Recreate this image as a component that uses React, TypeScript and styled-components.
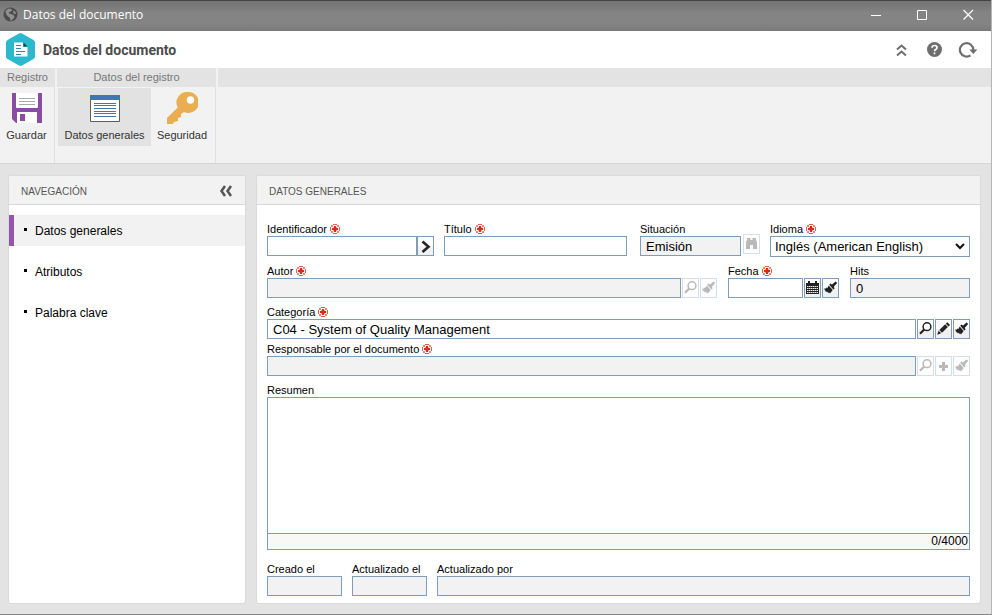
import React from "react";
import styled, { createGlobalStyle } from "styled-components";

const GlobalStyle = createGlobalStyle`
  *, *::before, *::after { box-sizing: border-box; }
  body { margin: 0; background: #e3e3e3; }
  button, input, select, textarea { font: inherit; color: inherit; margin: 0; border-radius: 0; }
`;

const Window = styled.div`
  min-height: 100vh;
  display: flex;
  flex-direction: column;
  background: #e3e3e3;
  border-right: 1px solid #b5b5b5;
  border-bottom: 1px solid #868686;
  font-family: "Liberation Sans", Arial, sans-serif;
  font-size: 11px;
  color: #000;
`;

const TitleBar = styled.header`
  height: 31px;
  display: flex;
  align-items: center;
  gap: 5px;
  padding: 0 0 3px 3px;
  border-top: 1px solid #454345;
  background: linear-gradient(#777 0, #777 3px, #848484 12px, #848484 22px, #7a7a7a 30px);
  color: #fff;
  font-family: "Open Sans", sans-serif;
  font-size: 12px;
  line-height: 16px;
`;

const WindowControls = styled.div`
  display: flex;
  margin-left: auto;
`;

const WindowButton = styled.button`
  width: 46px;
  height: 26px;
  display: flex;
  align-items: center;
  justify-content: center;
  padding: 0;
  border: 0;
  background: none;
`;

const AppHeader = styled.div`
  height: 37px;
  display: flex;
  align-items: center;
  gap: 7px;
  padding: 0 13px 0 5px;
  background: #fff;
`;

const PageTitle = styled.h1`
  flex: 1;
  margin: 0;
  font-family: Roboto, sans-serif;
  font-size: 14px;
  font-weight: 700;
  color: #4c4c4c;
`;

const HeaderActions = styled.div`
  display: flex;
  align-items: center;
  gap: 13px;
`;

const PlainButton = styled.button`
  display: flex;
  padding: 0;
  border: 0;
  background: none;
  color: #6e6e6e;
`;

const Ribbon = styled.div`
  height: 96px;
  display: flex;
  gap: 2px;
  background: #f2f2f2;
  border-bottom: 1px solid #d6d6d6;
`;

const RibbonGroup = styled.section<{ $grow?: boolean }>`
  flex: ${(p) => (p.$grow ? "1" : "none")};
  display: flex;
  flex-direction: column;
`;

const RibbonTitle = styled.h2`
  height: 19px;
  margin: 0;
  background: #e3e3e3;
  color: #777;
  font-size: 11px;
  font-weight: 400;
  line-height: 18px;
  text-align: center;
`;

const RibbonTools = styled.div`
  flex: 1;
  display: flex;
  align-items: flex-start;
  padding: 1px 2px 0 1px;
  border-right: 1px solid #e0e0e0;
`;

const Tool = styled.button<{ $width: number; $active?: boolean }>`
  width: ${(p) => p.$width}px;
  height: 58px;
  display: flex;
  flex-direction: column;
  align-items: center;
  gap: 3px;
  padding: 3px 0 0;
  border: 0;
  background: ${(p) => (p.$active ? "#e2e2e2" : "transparent")};
  color: #333;
  line-height: 14px;
  white-space: nowrap;
`;

const Workspace = styled.main`
  flex: 1;
  display: flex;
  gap: 12px;
  padding: 12px 11px 11px 9px;
`;

const Panel = styled.section<{ $width?: number }>`
  flex: ${(p) => (p.$width ? `0 0 ${p.$width}px` : "1")};
  min-width: 0;
  display: flex;
  flex-direction: column;
  background: #fff;
  border-radius: 2px;
  box-shadow: 0 0 1px 1px #dadada;
`;

const PanelHeader = styled.div`
  height: 29px;
  display: flex;
  align-items: center;
  justify-content: space-between;
  padding: 2px 12px 0;
  background: #f2f2f2;
  border-bottom: 1px solid #d8d8d8;
`;

const PanelTitle = styled.h2`
  margin: 0;
  font-size: 10px;
  font-weight: 400;
  color: #555;
`;

const NavList = styled.ul`
  list-style: none;
  margin: 0;
  padding: 10px 0 0;
  display: flex;
  flex-direction: column;
  gap: 10px;
`;

const NavLink = styled.a<{ $active?: boolean }>`
  height: 31px;
  display: flex;
  align-items: center;
  gap: 8px;
  padding-left: 10px;
  border-left: 5px solid ${(p) => (p.$active ? "#9355ad" : "transparent")};
  background: ${(p) => (p.$active ? "#f2f2f2" : "transparent")};
  color: #000;
  font-size: 12px;
  text-decoration: none;

  &::before {
    content: "";
    width: 3px;
    height: 3px;
    margin-bottom: 3px;
    background: #000;
  }
`;

const Form = styled.form`
  flex: 1;
  display: flex;
  flex-direction: column;
  padding: 17px 10px 7px;
`;

const Row = styled.div<{ $gap: number; $after: number }>`
  display: flex;
  align-items: flex-start;
  gap: ${(p) => p.$gap}px;
  margin-bottom: ${(p) => p.$after}px;
`;

const LookupRow = styled(Row)`
  margin-left: 3px;
`;

const FieldBox = styled.div<{ $width?: number }>`
  flex: ${(p) => (p.$width ? `0 0 ${p.$width}px` : "1")};
  min-width: 0;
  display: flex;
  flex-direction: column;
`;

const Label = styled.label`
  height: 14px;
  display: flex;
  align-items: center;
  gap: 3px;
  line-height: 14px;
  white-space: nowrap;
`;

const Controls = styled.div`
  display: flex;
  gap: 1px;
`;

const JoinedControls = styled(Controls)`
  gap: 0;
`;

const TextInput = styled.input`
  flex: 1;
  width: 0;
  min-width: 0;
  height: 20px;
  padding: 0 5px;
  border: 1px solid #7f9db9;
  background: #fff;
  font-size: 13px;
  outline: 0;

  &:read-only { background: #f2f2f2; }
`;

const SelectBox = styled.div`
  display: grid;
  align-items: center;

  > * { grid-area: 1 / 1; }
  > svg { justify-self: end; margin-right: 5px; pointer-events: none; }
`;

const Select = styled.select`
  width: 100%;
  height: 21px;
  padding: 0 4px;
  border: 1px solid #7f9db9;
  background: #fff;
  font-size: 13px;
  appearance: none;
`;

const IconButton = styled.button`
  width: 17px;
  height: 20px;
  display: flex;
  justify-content: center;
  padding: 1px 0 0;
  border: 1px solid #7f9db9;
  background: linear-gradient(#fff 50%, #f0f0f0 50%);
  color: #222;

  &:disabled { border-color: #d5dfe9; color: #b9b9b9; background: #fdfdfd; }
`;

const LookupButton = styled(IconButton)`
  margin-top: 12px;
`;

const SummaryBox = styled.div`
  flex: 1;
  display: flex;
  flex-direction: column;
  margin-bottom: 12px;
`;

const TextArea = styled.textarea`
  flex: 1;
  min-height: 80px;
  padding: 4px;
  border: 1px solid #7f9db9;
  font-size: 13px;
  outline: 0;
  resize: none;
`;

const Counter = styled.div`
  height: 16px;
  padding-right: 1px;
  border: 1px solid #7f9db9;
  border-top: 0;
  background: #f8f8f7;
  font-size: 12px;
  line-height: 14px;
  text-align: right;
`;

const RequiredMark = () => (
  <svg width="10" height="10" viewBox="0 0 10 10" role="img" aria-label="requerido">
    <path
      d="M3 .5h4M3 9.500h4M.5 3v4M9.500 3v4M1.500 1.500h1v1h-1zM7.500 1.500h1v1h-1zM1.500 7.500h1v1h-1zM7.500 7.500h1v1h-1z"
      fill="none"
      stroke="#ec5a4c"
    />
    <path d="M5 2v6M2 5h6" stroke="#e02818" strokeWidth="2" />
    <path d="M3 3.500h4M3 6.500h4" stroke="#f3968d" />
    <path d="M5 2v6" stroke="#e02818" strokeWidth="2" />
  </svg>
);

const SearchIcon = () => (
  <svg width="15" height="15" viewBox="0 0 15 15" fill="none" stroke="currentColor">
    <circle cx="9" cy="5.700" r="3.900" strokeWidth="1.500" />
    <path d="M6.200 8.500L2 12.700" strokeWidth="2.200" />
  </svg>
);

const BrushIcon = () => (
  <svg width="15" height="15" viewBox="0 0 15 15" fill="currentColor">
    <path d="M12.600 1.500l1.600 1.600-3.400 3.600.8 1.500-1.200 1.200-4.200-4.600 1.200-1.200 1.600.8z" />
    <path d="M5.700 5.500l4 4.600L7 13.500l-1-1.300-.7.800-1.300-1.400-1 .4L1 8.500l1.700.2.400-1.200 1.300.4z" />
  </svg>
);

const PencilIcon = () => (
  <svg width="15" height="15" viewBox="0 0 15 15" fill="currentColor">
    <path d="M11.300 1.200l2.700 2.700-1.500 1.500-2.700-2.700zM9.200 3.300l2.700 2.700-5.900 5.700-2.700-2.700zM2.600 9.700L5.200 12.300l-4 1.400z" />
  </svg>
);

const CalendarIcon = () => (
  <svg width="15" height="15" viewBox="0 0 15 15" fill="none" stroke="currentColor">
    <path d="M1 3h13v11H1z" fill="currentColor" stroke="none" />
    <path d="M4 1v3M11 1v3" strokeWidth="2" />
    <path d="M2 6.500h11M2 8.500h11M2 10.500h11M2 12.500h11" stroke="#eee" strokeDasharray="1.500 .5" />
  </svg>
);

const BinocularsIcon = () => (
  <svg width="15" height="15" viewBox="0 0 15 15" fill="currentColor">
    <path d="M3 2h3.500v2h2V2H12v2l1 2v7H9V9H6v4H2V6l1-2z" />
  </svg>
);

const PlusIcon = () => (
  <svg width="15" height="15" viewBox="0 0 15 15" stroke="currentColor" strokeWidth="3">
    <path d="M7.500 4v9M3 8.500h9" />
  </svg>
);

const ArrowIcon = () => (
  <svg width="15" height="15" viewBox="0 0 15 15" fill="none" stroke="#222" strokeWidth="2.600">
    <path d="M4.500 3.500L10.500 8.700l-6 5.200" />
  </svg>
);

type FieldProps = {
  id: string;
  label: string;
  width?: number;
  required?: boolean;
  readOnly?: boolean;
  value?: string;
  joined?: boolean;
  children?: React.ReactNode;
};

const Field = ({ id, label, width, required, readOnly, value = "", joined, children }: FieldProps) => {
  const Wrapper = joined ? JoinedControls : Controls;
  return (
    <FieldBox $width={width}>
      <Label htmlFor={id}>
        {label} {required && <RequiredMark />}
      </Label>
      <Wrapper>
        <TextInput id={id} type="text" defaultValue={value} readOnly={readOnly} />
        {children}
      </Wrapper>
    </FieldBox>
  );
};

export default function App() {
  return (
    <>
      <GlobalStyle />
      <Window>
        <TitleBar>
          <svg width="15" height="15" viewBox="0 0 15 15">
            <circle cx="7.500" cy="7.500" r="7" fill="#4b4b4b" />
            <path d="M2.500 4l3-2.500 3 .5 .5 1.500-2 1.500-1 0 0 1.500 2 .5 2.500 1 1 1.500-1 2-2 2-1 .5-.5-3-2-1.500L3 7z" fill="#8f8f8f" />
            <path d="M10.500 3.500l2 1.500.5 2-1.500 0-1.500-1.500z" fill="#8f8f8f" />
          </svg>
          <span>Datos del documento</span>
          <WindowControls>
            <WindowButton type="button" aria-label="Minimizar">
              <svg width="11" height="11" stroke="#fff"><path d="M0 6.500h10" /></svg>
            </WindowButton>
            <WindowButton type="button" aria-label="Maximizar">
              <svg width="11" height="11" stroke="#fff" fill="none"><path d="M.5 1.500h9v9h-9z" /></svg>
            </WindowButton>
            <WindowButton type="button" aria-label="Cerrar">
              <svg width="11" height="11" stroke="#fff" strokeWidth="1.200"><path d="M.5 1l9.500 9.500M10 1L.5 10.500" /></svg>
            </WindowButton>
          </WindowControls>
        </TitleBar>

        <AppHeader>
          <svg width="31" height="33" viewBox="0 0 31 33">
            <path d="M14 .5q1.500-.8 3 0l11.500 6.500q1.500 1 1.500 2.500v14q0 1.500-1.500 2.500l-11.500 6.500q-1.500.8-3 0l-11.500-6.500q-1.500-1-1.500-2.500v-14q0-1.500 1.500-2.500z" fill="#2cb9cd" />
            <path d="M9 9.500h9v4.500h4.500v9.500H9z" fill="#fff" />
            <path d="M18.500 9.500l4 4h-4z" fill="#15434d" />
            <path d="M11 12.500h5M11 15.500h5M11 18.500h9M11 21.500h5" stroke="#2591a3" />
          </svg>
          <PageTitle>Datos del documento</PageTitle>
          <HeaderActions>
            <PlainButton type="button" aria-label="Contraer">
              <svg width="21" height="20" viewBox="0 0 21 20" fill="none" stroke="currentColor" strokeWidth="2">
                <path d="M6 9.500l4.500-4 4.500 4M6 15.500l4.500-4 4.500 4" />
              </svg>
            </PlainButton>
            <PlainButton type="button" aria-label="Ayuda">
              <svg width="20" height="20" viewBox="0 0 20 20">
                <circle cx="9.500" cy="9.500" r="7.500" fill="currentColor" />
                <path d="M7 7.800q0-2.300 2.500-2.300T12 7.500q0 1.200-1.300 2-1.200.7-1.200 1.800M9.500 12.500v1.800" fill="none" stroke="#fff" strokeWidth="1.700" />
              </svg>
            </PlainButton>
            <PlainButton type="button" aria-label="Actualizar">
              <svg width="20" height="20" viewBox="0 0 20 20">
                <path d="M12.500 15.300A6.700 6.700 0 1 1 15.300 10" fill="none" stroke="currentColor" strokeWidth="2.200" />
                <path d="M11.300 9.500H19.300L15.300 14z" fill="currentColor" />
              </svg>
            </PlainButton>
          </HeaderActions>
        </AppHeader>

        <Ribbon>
          <RibbonGroup>
            <RibbonTitle>Registro</RibbonTitle>
            <RibbonTools>
              <Tool type="button" $width={51}>
                <svg width="32" height="34" viewBox="0 0 32 34">
                  <path d="M1 2h30v30H5l-4-4z" fill="#8b4ba5" />
                  <path d="M5 2h22v14q0 1-1 1H6q-1 0-1-1z" fill="#fff" />
                  <path d="M8 7.500h16M8 10.500h16M8 13.500h16" stroke="#aaa" />
                  <path d="M6 21h20v11H6z" fill="#fff" />
                  <path d="M9 23h5v7H9z" fill="#8b4ba5" />
                </svg>
                Guardar
              </Tool>
            </RibbonTools>
          </RibbonGroup>
          <RibbonGroup>
            <RibbonTitle>Datos del registro</RibbonTitle>
            <RibbonTools>
              <Tool type="button" $width={93} $active>
                <svg width="32" height="34" viewBox="0 0 32 34">
                  <path d="M1.500 4.500h29v26h-29z" fill="#fff" stroke="#5d5d5d" />
                  <path d="M1 4h30v5H1z" fill="#3d78b4" />
                  <path d="M5 12.500h22M5 14.500h22M5 17.500h22M5 20.500h22M5 22.500h22M5 25.500h22" stroke="#3f78b0" />
                </svg>
                Datos generales
              </Tool>
              <Tool type="button" $width={62}>
                <svg width="32" height="34" viewBox="0 0 32 34">
                  <path d="M22 1a10.500 10.500 0 1 1-4 20l-3 2v3l-3 1v3l-4 1-1 2H1v-6l10.800-10.500A10.500 10.500 0 0 1 22 1z" fill="#e9ae52" />
                  <circle cx="24.500" cy="9" r="3.700" fill="#fff" />
                </svg>
                Seguridad
              </Tool>
            </RibbonTools>
          </RibbonGroup>
          <RibbonGroup $grow>
            <RibbonTitle />
          </RibbonGroup>
        </Ribbon>

        <Workspace>
          <Panel as="nav" $width={236}>
            <PanelHeader>
              <PanelTitle>NAVEGACIÓN</PanelTitle>
              <PlainButton type="button" aria-label="Ocultar navegación">
                <svg width="14" height="12" viewBox="0 0 14 12" fill="none" stroke="#555" strokeWidth="2.500">
                  <path d="M6 1L2.500 6l3.500 5M12 1L8.500 6l3.500 5" />
                </svg>
              </PlainButton>
            </PanelHeader>
            <NavList>
              <li><NavLink href="#datos" $active>Datos generales</NavLink></li>
              <li><NavLink href="#atributos">Atributos</NavLink></li>
              <li><NavLink href="#palabra">Palabra clave</NavLink></li>
            </NavList>
          </Panel>

          <Panel>
            <PanelHeader>
              <PanelTitle>DATOS GENERALES</PanelTitle>
            </PanelHeader>
            <Form>
              <Row $gap={10} $after={7}>
                <Field id="identificador" label="Identificador" width={167} required joined>
                  <IconButton type="button" aria-label="Generar"><ArrowIcon /></IconButton>
                </Field>
                <Field id="titulo" label="Título" required />
                <LookupRow $gap={2} $after={0}>
                  <Field id="situacion" label="Situación" width={101} value="Emisión" readOnly />
                  <LookupButton type="button" aria-label="Ver situación" disabled><BinocularsIcon /></LookupButton>
                </LookupRow>
                <FieldBox $width={200}>
                  <Label htmlFor="idioma">Idioma <RequiredMark /></Label>
                  <SelectBox>
                    <Select id="idioma"><option>Inglés (American English)</option></Select>
                    <svg width="10" height="7" fill="none" stroke="#111" strokeWidth="2"><path d="M1 1l4 4 4-4" /></svg>
                  </SelectBox>
                </FieldBox>
              </Row>
              <Row $gap={11} $after={7}>
                <Field id="autor" label="Autor" required readOnly>
                  <IconButton type="button" aria-label="Buscar autor" disabled><SearchIcon /></IconButton>
                  <IconButton type="button" aria-label="Limpiar autor" disabled><BrushIcon /></IconButton>
                </Field>
                <Field id="fecha" label="Fecha" width={111} required>
                  <IconButton type="button" aria-label="Calendario"><CalendarIcon /></IconButton>
                  <IconButton type="button" aria-label="Limpiar fecha"><BrushIcon /></IconButton>
                </Field>
                <Field id="hits" label="Hits" width={120} value="0" readOnly />
              </Row>
              <Row $gap={0} $after={3}>
                <Field id="categoria" label="Categoría" value="C04 - System of Quality Management" required>
                  <IconButton type="button" aria-label="Buscar categoría"><SearchIcon /></IconButton>
                  <IconButton type="button" aria-label="Editar categoría"><PencilIcon /></IconButton>
                  <IconButton type="button" aria-label="Limpiar categoría"><BrushIcon /></IconButton>
                </Field>
              </Row>
              <Row $gap={0} $after={7}>
                <Field id="responsable" label="Responsable por el documento" required readOnly>
                  <IconButton type="button" aria-label="Buscar responsable" disabled><SearchIcon /></IconButton>
                  <IconButton type="button" aria-label="Agregar responsable" disabled><PlusIcon /></IconButton>
                  <IconButton type="button" aria-label="Limpiar responsable" disabled><BrushIcon /></IconButton>
                </Field>
              </Row>
              <SummaryBox>
                <Label htmlFor="resumen">Resumen</Label>
                <TextArea id="resumen" />
                <Counter>0/4000</Counter>
              </SummaryBox>
              <Row $gap={10} $after={0}>
                <Field id="creado" label="Creado el" width={75} readOnly />
                <Field id="actualizado" label="Actualizado el" width={75} readOnly />
                <Field id="actualizado-por" label="Actualizado por" readOnly />
              </Row>
            </Form>
          </Panel>
        </Workspace>
      </Window>
    </>
  );
}
